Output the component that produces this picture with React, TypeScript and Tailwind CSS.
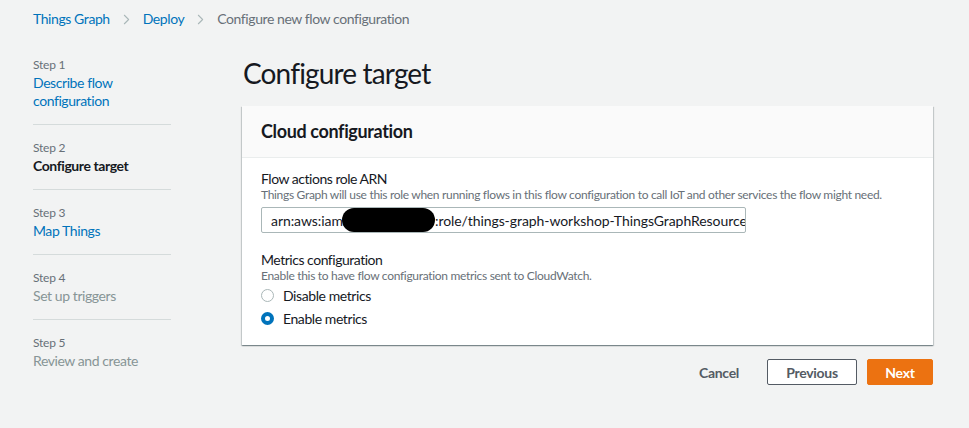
import { ChevronRight } from 'lucide-react';

const steps = [
    { label: 'Step 1', name: ['Describe flow', 'configuration'], state: 'link' },
    { label: 'Step 2', name: ['Configure target'], state: 'active' },
    { label: 'Step 3', name: ['Map Things'], state: 'link' },
    { label: 'Step 4', name: ['Set up triggers'], state: 'disabled' },
    { label: 'Step 5', name: ['Review and create'], state: 'disabled' },
];

function Radio({ checked, label }: { checked?: boolean; label: string }) {
    return (
        <div className="flex items-center h-[23px]">
            {checked ? (
                <span className="w-[13px] h-[13px] rounded-full border-[4px] border-[#0073bb] bg-white" />
            ) : (
                <span className="w-[13px] h-[13px] rounded-full border border-[#aab7b8] bg-white" />
            )}
            <span className="ml-[9px] text-[14px] leading-[18px] tracking-[-0.03em] text-[#16191f]">{label}</span>
        </div>
    );
}

export default function App() {
    return (
        <div
            className="min-h-screen bg-[#f2f3f3] text-[#16191f] pt-[9px]"
            style={{ fontFamily: 'Lato, Roboto, "Liberation Sans", sans-serif' }}
        >
            {/* Breadcrumbs */}
            <nav className="flex items-center h-[20px] pl-[33px] text-[14px] leading-[20px] tracking-[-0.03em]">
                <span className="text-[#0073bb]">Things Graph</span>
                <ChevronRight className="w-[17px] h-[17px] mx-2 text-[#aab7b8]" strokeWidth={1.5} />
                <span className="text-[#0073bb]">Deploy</span>
                <ChevronRight className="w-[17px] h-[17px] mx-2 text-[#aab7b8]" strokeWidth={1.5} />
                <span className="text-[#687078]">Configure new flow configuration</span>
            </nav>

            <div className="flex mt-[26px] pl-[33px]">
                {/* Steps */}
                <aside className="w-[138px] pt-[2px]">
                    {steps.map((step, i) => (
                        <div
                            key={step.label}
                            className={`${i > 0 ? 'pt-[15px] border-t border-[#d5dbdb]' : ''} ${i < steps.length - 1 ? 'pb-[14px]' : ''}`}
                        >
                            <div className="text-[12px] leading-[16px] tracking-[-0.02em] text-[#687078]">{step.label}</div>
                            <div
                                className={`mt-[1px] text-[14px] leading-[18px] tracking-[-0.03em] ${
                                    step.state === 'active'
                                        ? 'font-bold text-[#16191f]'
                                        : step.state === 'link'
                                        ? 'text-[#0073bb]'
                                        : 'text-[#879596]'
                                }`}
                            >
                                {step.name.map((line) => (
                                    <div key={line}>{line}</div>
                                ))}
                            </div>
                        </div>
                    ))}
                </aside>

                {/* Main */}
                <main className="ml-[71px] w-[691px]">
                    <h1 className="text-[28px] leading-[36px] font-normal tracking-[-0.03em] text-[#16191f] pl-[1px]">Configure target</h1>

                    <div className="mt-[15px] bg-white shadow-[0_1px_1px_0_rgba(0,28,36,0.3),1px_1px_1px_0_rgba(0,28,36,0.15),-1px_1px_1px_0_rgba(0,28,36,0.15)]">
                        <div className="bg-[#fafafa] border-b border-[#eaeded] px-[19px] pt-[14px] pb-[15px]">
                            <h2 className="text-[18px] leading-[22px] font-bold tracking-[-0.02em]">Cloud configuration</h2>
                        </div>

                        <div className="px-[19px] pt-[12px] pb-[15px] tracking-[-0.03em]">
                            <div className="text-[14px] leading-[18px]">Flow actions role ARN</div>
                            <div className="text-[12px] leading-[14px] tracking-[-0.026em] text-[#687078] whitespace-nowrap">
                                Things Graph will use this role when running flows in this flow configuration to call IoT and other services the flow might need.
                            </div>
                            <div className="mt-[5px] w-[485px] h-[26px] border border-[#aab7b8] rounded-[2px] bg-white pl-[9px] flex items-center overflow-hidden whitespace-nowrap text-[14px] tracking-[-0.005em] text-[#16191f]">
                                <span className="w-[71px] shrink-0">arn:aws:iam:</span>
                                <span className="inline-block shrink-0 w-[93px] h-[24px] rounded-full bg-black" />
                                <span>:role/things-graph-workshop-ThingsGraphResourceRole-1XQ2</span>
                            </div>

                            <div className="mt-[18px] text-[14px] leading-[18px]">Metrics configuration</div>
                            <div className="text-[12px] leading-[14px] tracking-[-0.026em] text-[#687078]">
                                Enable this to have flow configuration metrics sent to CloudWatch.
                            </div>
                            <div className="mt-[1px]">
                                <Radio label="Disable metrics" />
                                <Radio checked label="Enable metrics" />
                            </div>
                        </div>
                    </div>

                    <div className="mt-[14px] flex justify-end items-center gap-[10px] text-[14px] font-bold tracking-[-0.02em]">
                        <button className="w-[76px] h-[26px] text-[#545b64]">Cancel</button>
                        <button className="w-[90px] h-[26px] text-[#545b64] bg-white border border-[#545b64] rounded-[2px]">
                            Previous
                        </button>
                        <button className="w-[66px] h-[26px] text-white bg-[#ec7211] border border-[#ec7211] rounded-[2px]">
                            Next
                        </button>
                    </div>
                </main>
            </div>
        </div>
    );
}
